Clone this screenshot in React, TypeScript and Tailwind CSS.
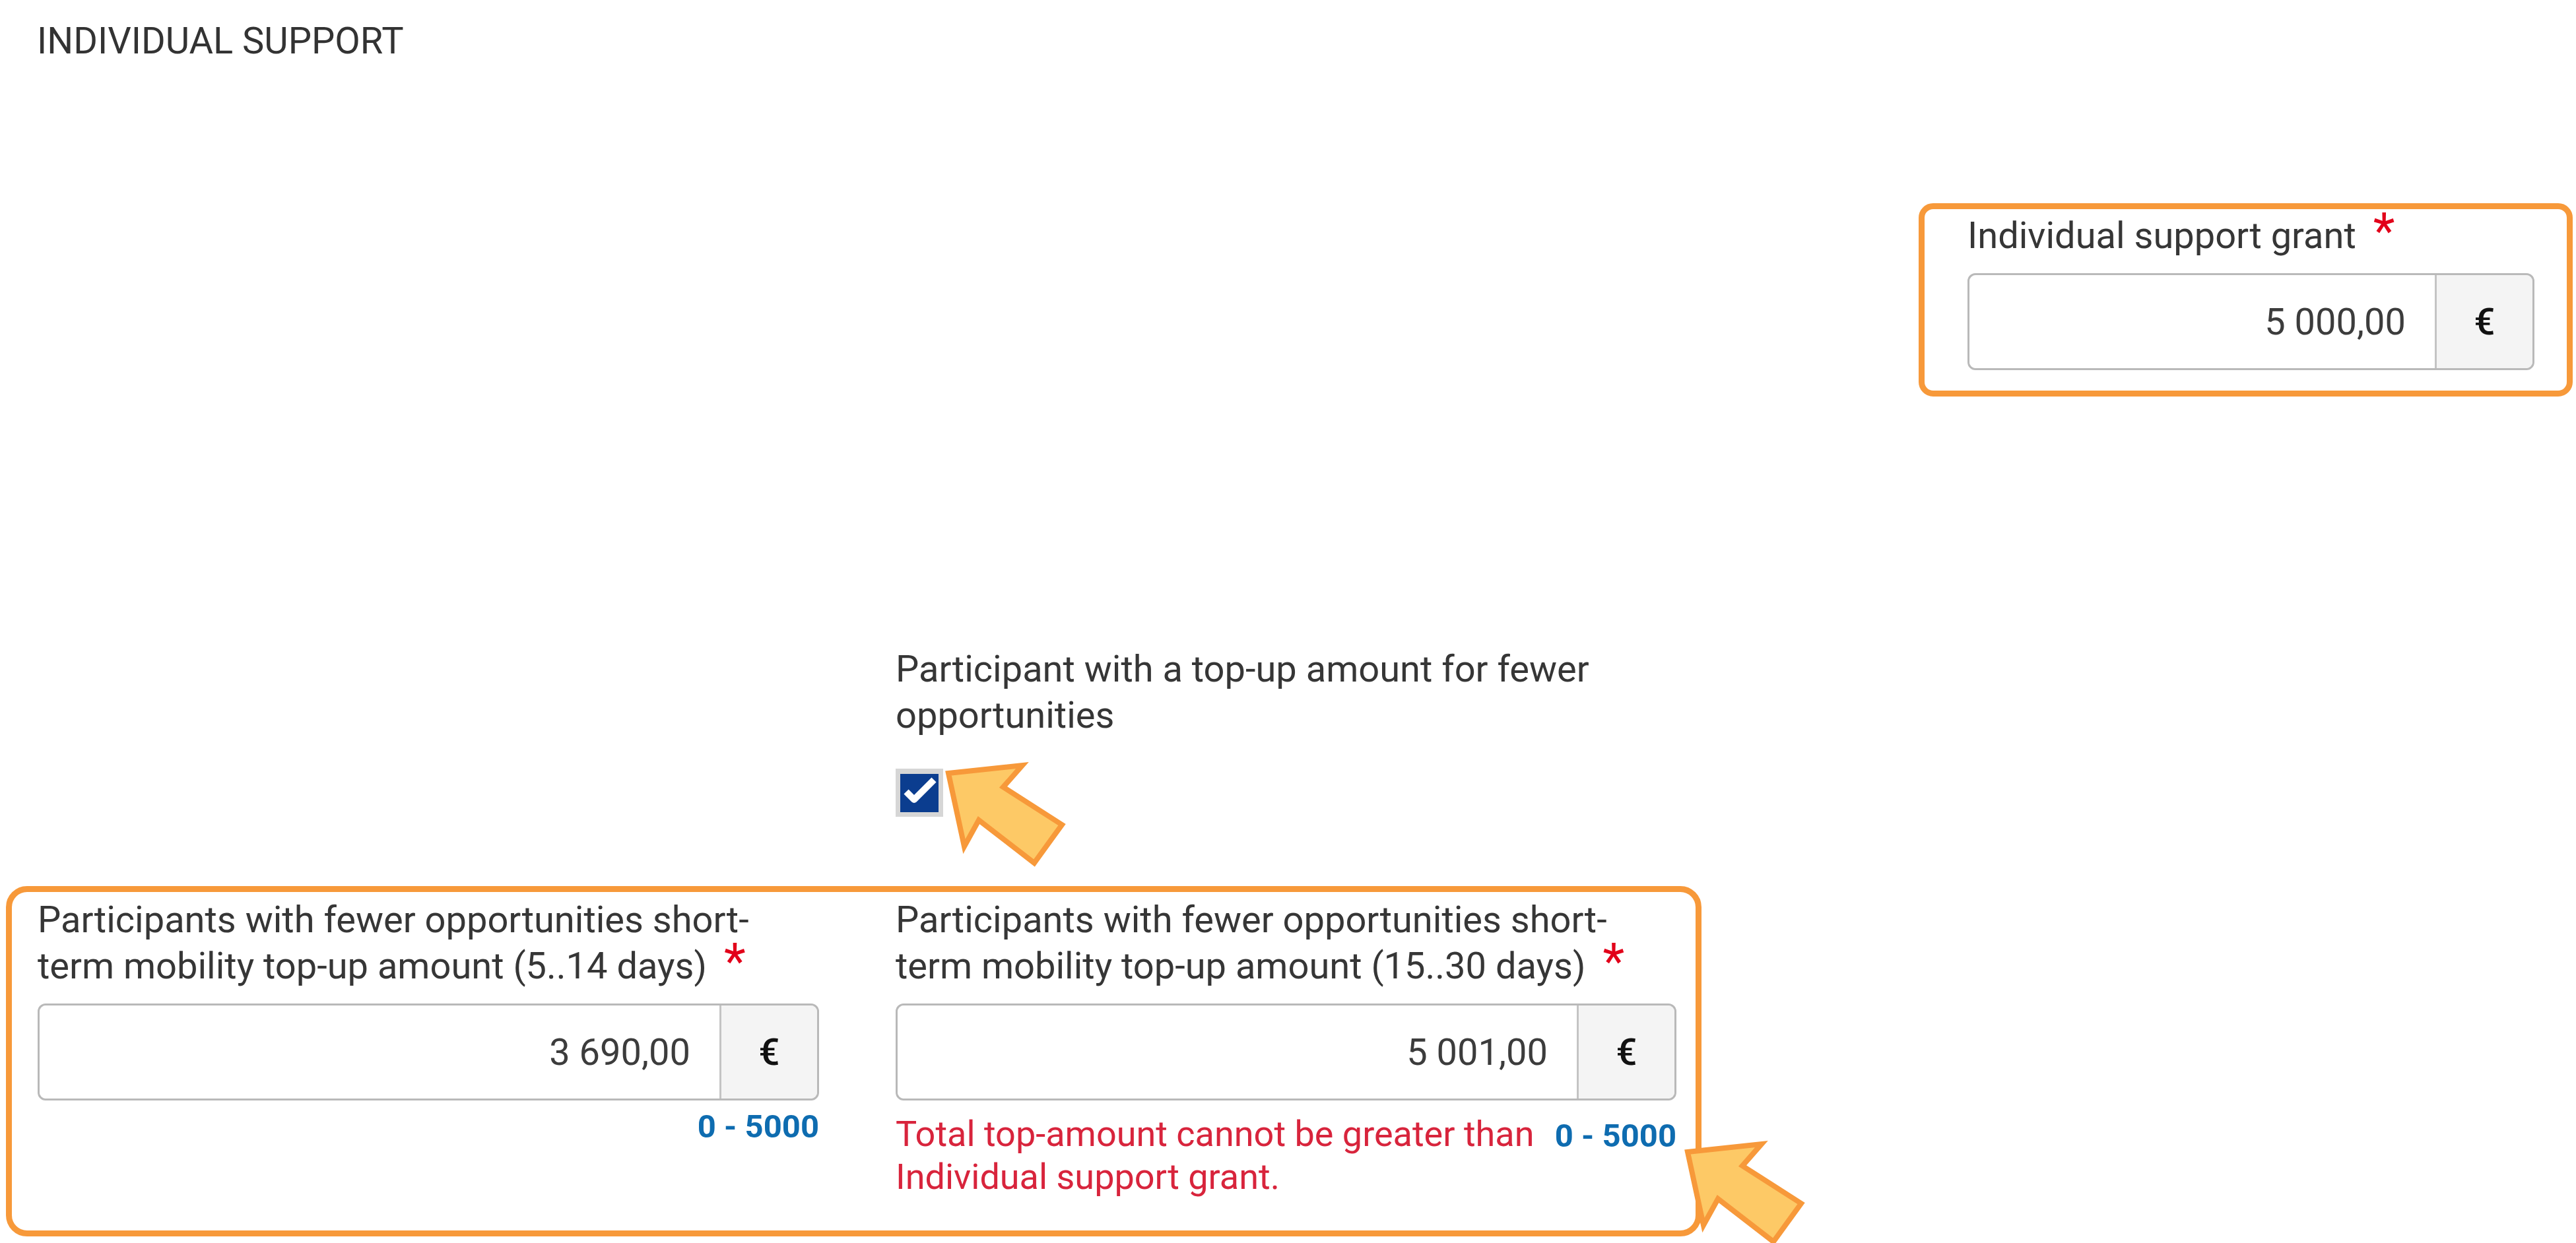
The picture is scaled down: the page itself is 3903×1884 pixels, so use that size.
import React from "react";

const ORANGE = "border-[#f7993a]";

interface MoneyFieldProps {
  label: string;
  value: string;
}

// Label + right-aligned amount input with a € addon
const MoneyField: React.FC<MoneyFieldProps> = ({ label, value }) => (
  <div className="flex flex-col">
    <label className="text-[56px] leading-[70px] text-[#363636]">
      {label}
      <span className="ml-[26px] inline-block h-[40px] align-baseline text-[76px] leading-[40px] text-[#e2001a]">
        *
      </span>
    </label>
    <div className="mt-[22px] flex h-[147px] rounded-[12px] border-[3px] border-[#b9b9b9] shadow-[inset_0_2px_3px_rgba(0,0,0,0.08)]">
      <div className="flex flex-1 items-center justify-end rounded-l-[10px] bg-white pr-[44px] text-[56px] text-[#3c3c3c]">
        {value}
      </div>
      <div className="flex w-[148px] items-center justify-center rounded-r-[10px] border-l-[3px] border-[#c4c4c4] bg-[#f4f4f4] text-[56px] font-medium text-[#111]">
        €
      </div>
    </div>
  </div>
);

const Range: React.FC<{ className?: string }> = ({ className = "" }) => (
  <span className={`shrink-0 text-[49px] font-bold leading-[57px] text-[#0e6cb0] ${className}`}>
    0 - 5000
  </span>
);

const Arrow: React.FC<{ x: number; y: number }> = ({ x, y }) => {
  // tip, barb, notch, shaft end top, shaft end bottom, notch, barb
  const pts = [
    [0, 0],
    [112, -12],
    [83, 21],
    [172, 78],
    [130, 136],
    [46, 71],
    [24, 111],
  ]
    .map(([px, py]) => `${px + x},${py + y}`)
    .join(" ");
  return (
    <polygon
      points={pts}
      fill="#fdc966"
      stroke="#f7993a"
      strokeWidth={8}
      strokeLinejoin="miter"
    />
  );
};

export default function App() {
  return (
    <div className="relative h-[1884px] w-[3903px] overflow-hidden bg-white font-['Roboto','Liberation_Sans',sans-serif] text-[#363636]">
      {/* Section title */}
      <h2 className="pl-[56px] pt-[27px] text-[56px] font-normal leading-[70px] text-[#333]">
        INDIVIDUAL SUPPORT
      </h2>

      {/* Individual support grant */}
      <div className="mt-[211px] flex justify-end pr-[5px]">
        <div className={`rounded-[22px] border-[9px] ${ORANGE} pb-[31px] pl-[65px] pr-[49px] pt-[5px]`}>
          <div className="w-[859px]">
            <MoneyField label="Individual support grant" value="5 000,00" />
          </div>
        </div>
      </div>

      {/* Fewer opportunities checkbox */}
      <div className="mt-[378px] grid grid-cols-[1184px_1183px] gap-x-[116px] pl-[57px]">
        <div className="col-start-2 flex flex-col">
          <span className="text-[56px] leading-[70px]">
            Participant with a top-up amount for fewer opportunities
          </span>
          <div className="mt-[46px] flex h-[73px] w-[72px] items-center justify-center bg-[#d6d6d6]">
            <div className="flex h-[58px] w-[58px] items-center justify-center bg-[#0b3d8f]">
              <svg width="58" height="58" viewBox="0 0 58 58">
                <polyline
                  points="9,27 21,39 51,9"
                  fill="none"
                  stroke="#fff"
                  strokeWidth={10}
                  strokeLinejoin="round"
                />
              </svg>
            </div>
          </div>
        </div>
      </div>

      {/* Top-up amounts */}
      <div className="ml-[9px] mt-[105px] w-[2569px]">
        <div className={`rounded-[32px] border-[9px] ${ORANGE} pb-[49px] pl-[39px] pr-[30px] pt-[7px]`}>
          <div className="grid grid-cols-[1184px_1183px] gap-x-[116px]">
            <div className="flex flex-col">
              <MoneyField
                label="Participants with fewer opportunities short-term mobility top-up amount (5..14 days)"
                value="3 690,00"
              />
              <div className="mt-[11px] flex justify-end">
                <Range />
              </div>
            </div>
            <div className="flex flex-col">
              <MoneyField
                label="Participants with fewer opportunities short-term mobility top-up amount (15..30 days)"
                value="5 001,00"
              />
              <div className="mt-[18px] flex items-start justify-between gap-[20px]">
                <span className="text-[54px] leading-[65px] text-[#d8243c]">
                  Total top-amount cannot be greater than Individual support grant.
                </span>
                <Range className="mt-[7px]" />
              </div>
            </div>
          </div>
        </div>
      </div>

      {/* Annotation arrows */}
      <svg
        className="pointer-events-none absolute inset-0"
        width="3903"
        height="1884"
        viewBox="0 0 3903 1884"
      >
        <Arrow x={1437} y={1172} />
        <Arrow x={2557} y={1746} />
      </svg>
    </div>
  );
}
